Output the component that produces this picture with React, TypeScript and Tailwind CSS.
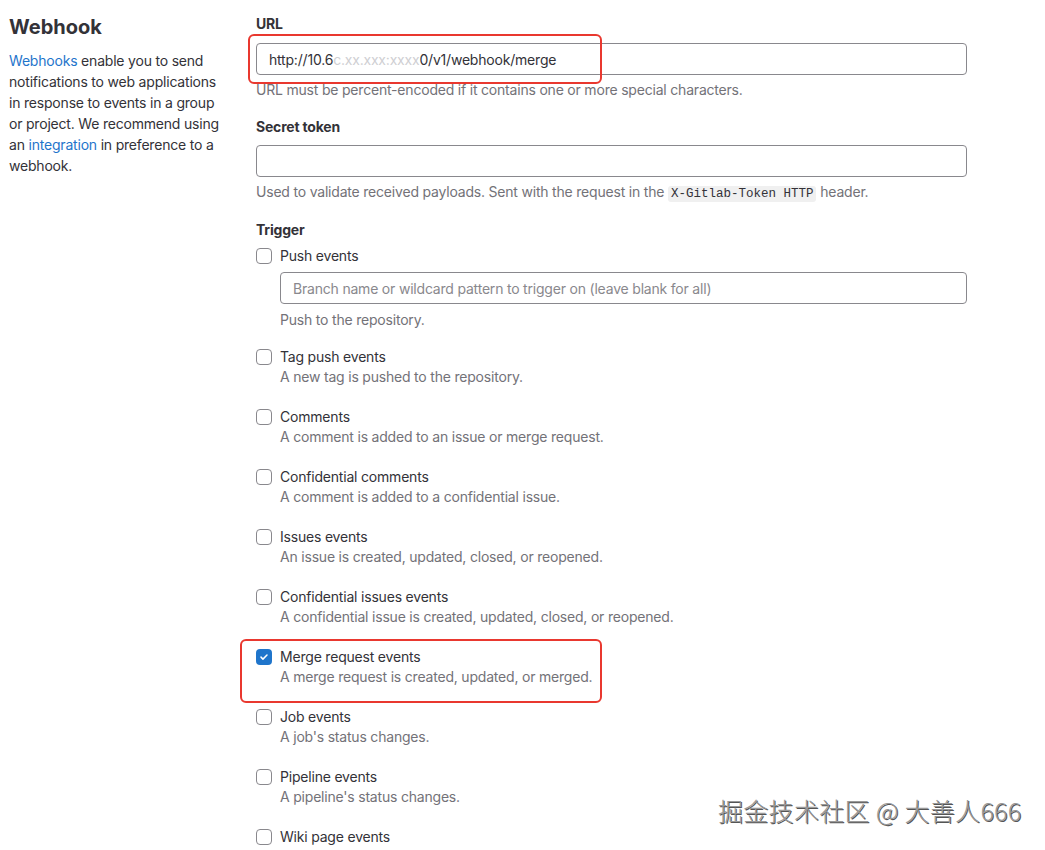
import React from "react";

type Trigger = {
  label: string;
  desc: string;
  checked?: boolean;
  highlight?: boolean;
};

const triggers: Trigger[] = [
  { label: "Tag push events", desc: "A new tag is pushed to the repository." },
  { label: "Comments", desc: "A comment is added to an issue or merge request." },
  { label: "Confidential comments", desc: "A comment is added to a confidential issue." },
  { label: "Issues events", desc: "An issue is created, updated, closed, or reopened." },
  {
    label: "Confidential issues events",
    desc: "A confidential issue is created, updated, closed, or reopened.",
  },
  {
    label: "Merge request events",
    desc: "A merge request is created, updated, or merged.",
    checked: true,
    highlight: true,
  },
  { label: "Job events", desc: "A job's status changes." },
  { label: "Pipeline events", desc: "A pipeline's status changes." },
  { label: "Wiki page events", desc: "" },
];

const Checkbox = ({ checked }: { checked?: boolean }) =>
  checked ? (
    <span className="flex size-4 shrink-0 items-center justify-center rounded-[4px] bg-[#1f75cb]">
      <svg viewBox="0 0 16 16" className="size-3" fill="none">
        <path d="M4 8.2l2.6 2.6L12 5.4" stroke="white" strokeWidth="2" strokeLinecap="round" strokeLinejoin="round" />
      </svg>
    </span>
  ) : (
    <span className="size-4 shrink-0 rounded-[4px] border border-[#89888d] bg-white" />
  );

const App: React.FC = () => {
  return (
    <div className="relative h-[850px] w-[1045px] overflow-hidden bg-white font-['Inter',sans-serif] text-[14px] tracking-[-0.2px] text-[#333238]">
      <div className="flex">
        {/* ---------------- left side ---------------- */}
        <div className="w-[256px] shrink-0 pl-[9px] pr-[26px] pt-[15px]">
          <h2 className="text-[20px] font-bold leading-[24px] tracking-normal text-[#333238]">Webhook</h2>
          <p className="mt-[11px] leading-[21px]">
            <span className="text-[#1f75cb]">Webhooks</span> enable you to send notifications to
            web applications in response to events in a group or project. We recommend using an{" "}
            <span className="text-[#1f75cb]">integration</span> in preference to a webhook.
          </p>
        </div>

        {/* ---------------- form ---------------- */}
        <div className="w-[711px] shrink-0 pt-[15px]">
          <label className="block font-bold leading-[18px]">URL</label>
          <div className="relative mt-[10px]">
            <div className="flex h-[32px] items-center rounded-[4px] border border-[#89888d] px-[12px]">
              http://10.6<span className="text-[#cfcfd3]">c.xx.xxx:xxxx</span>0/v1/webhook/merge
            </div>
            <div className="absolute -left-[8px] -top-[9px] h-[50px] w-[354px] rounded-[6px] border-2 border-[#e9382f]" />
          </div>
          <p className="mt-[5px] leading-[20px] text-[#737278]">
            URL must be percent-encoded if it contains one or more special characters.
          </p>

          <label className="mt-[18px] block font-bold leading-[18px]">Secret token</label>
          <div className="mt-[9px] h-[32px] rounded-[4px] border border-[#89888d]" />
          <p className="mt-[5px] leading-[20px] text-[#737278]">
            Used to validate received payloads. Sent with the request in the{" "}
            <code className="rounded-[3px] bg-[#f0f0f0] px-[3px] py-[1px] font-['Liberation_Mono',monospace] text-[12.5px] tracking-normal text-[#333238]">
              X-Gitlab-Token HTTP
            </code>{" "}
            header.
          </p>

          <label className="mt-[17px] block font-bold leading-[18px]">Trigger</label>
          <div className="mt-[7px] flex items-center gap-[8px] leading-[20px]">
            <Checkbox />
            <span>Push events</span>
          </div>
          <div className="ml-[24px] mt-[6px] flex h-[32px] items-center rounded-[4px] border border-[#89888d] px-[12px] text-[#89888d]">
            Branch name or wildcard pattern to trigger on (leave blank for all)
          </div>
          <p className="ml-[24px] mt-[6px] leading-[20px] text-[#737278]">Push to the repository.</p>

          <div className="mt-[17px] flex flex-col gap-[20px]">
            {triggers.map((t) => (
              <div key={t.label} className="relative">
                <div className="flex items-center gap-[8px] leading-[20px]">
                  <Checkbox checked={t.checked} />
                  <span>{t.label}</span>
                </div>
                {t.desc && (
                  <p className="ml-[24px] leading-[20px] text-[#737278]">{t.desc}</p>
                )}
                {t.highlight && (
                  <div className="absolute -left-[16px] -top-[8px] h-[64px] w-[362px] rounded-[6px] border-2 border-[#e9382f]" />
                )}
              </div>
            ))}
          </div>
        </div>
      </div>

      {/* watermark */}
      <div className="absolute left-[718px] top-[793px] font-['Noto_Sans_CJK_SC',sans-serif] text-[25px] font-light leading-[34px] tracking-[0.3px] text-[#999999] [text-shadow:1px_1px_0_#555555,-1px_-1px_0_#ffffff]">
        掘金技术社区 @ 大善人666
      </div>
    </div>
  );
};

export default App;
